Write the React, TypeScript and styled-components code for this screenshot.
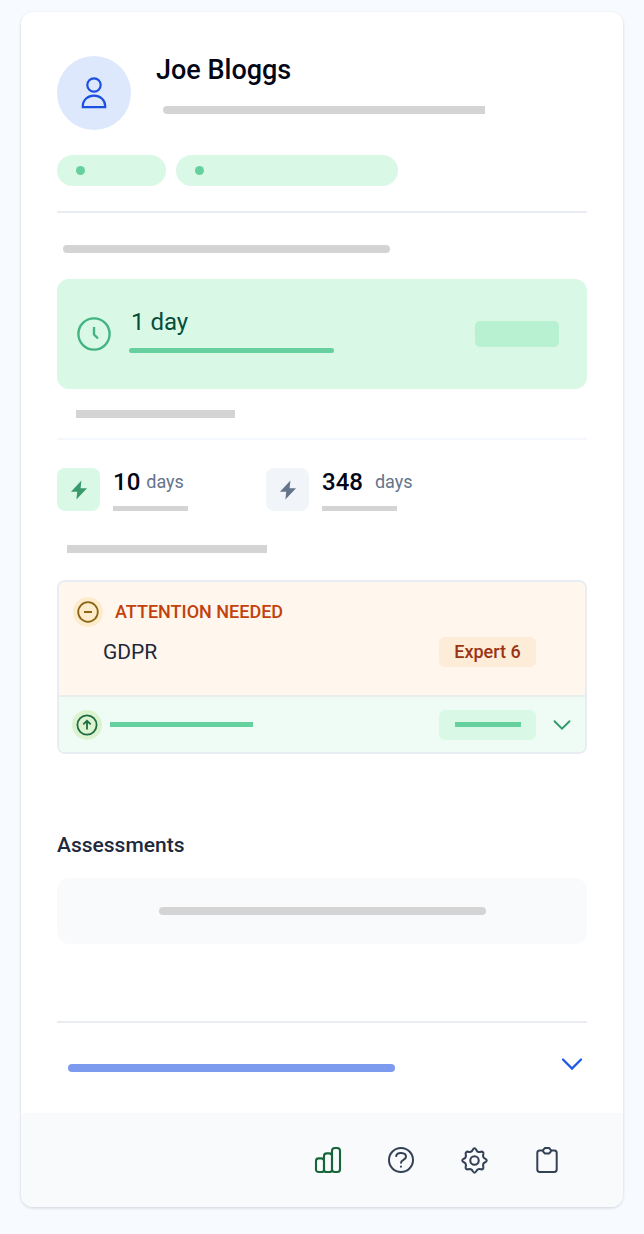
import React from "react";
import styled, { createGlobalStyle } from "styled-components";

const GlobalStyle = createGlobalStyle`
  *, *::before, *::after { box-sizing: border-box; }
  body {
    margin: 0;
    background: #f7fbff;
    font-family: Roboto, "Liberation Sans", sans-serif;
    color: #0f172a;
  }
  h1, h2, h3, p { margin: 0; }
  svg { display: block; flex: none; }
`;

const Page = styled.div`
  padding: 12px 21px 27px 21px;
`;

const Card = styled.main`
  background: #ffffff;
  border-radius: 12px;
  box-shadow: 0 1px 3px rgba(15, 23, 42, 0.18);
  overflow: hidden;
`;

const Body = styled.div`
  padding: 44px 36px 0;
`;

const Bar = styled.div<{ $w: number; $h?: number; $color?: string; $round?: string }>`
  width: ${(p) => p.$w}px;
  max-width: 100%;
  height: ${(p) => p.$h ?? 8}px;
  background: ${(p) => p.$color ?? "#d4d4d4"};
  border-radius: ${(p) => p.$round ?? "0"};
`;

const Line = styled.hr<{ $color?: string }>`
  height: 2px;
  margin: 0;
  border: 0;
  background: ${(p) => p.$color ?? "#e9edf3"};
`;

const Profile = styled.header`
  display: flex;
  gap: 25px;
`;

const Avatar = styled.div`
  display: grid;
  place-items: center;
  width: 74px;
  height: 74px;
  border-radius: 50%;
  background: #dde8fc;
  flex: none;
`;

const ProfileText = styled.div`
  display: flex;
  flex-direction: column;
  gap: 22px;
  min-width: 0;
  ${Bar} { margin-left: 7px; }
`;

const Name = styled.h1`
  font-size: 27px;
  font-weight: 500;
  line-height: 28px;
  color: #020617;
`;

const Pills = styled.div`
  display: flex;
  gap: 10px;
  margin: 25px 0;
`;

const Pill = styled.div<{ $w: number }>`
  display: flex;
  align-items: center;
  width: ${(p) => p.$w}px;
  height: 31px;
  padding-left: 19px;
  border-radius: 16px;
  background: #daf8e6;
  &::before {
    content: "";
    width: 9px;
    height: 9px;
    border-radius: 50%;
    background: #66d19e;
  }
`;

const Availability = styled.section`
  padding: 32px 0 20px;
`;

const LabelSlot = styled.div<{ $indent: number }>`
  padding-left: ${(p) => p.$indent}px;
`;

const Notice = styled.div`
  display: flex;
  align-items: center;
  height: 110px;
  margin: 26px 0 21px;
  padding: 0 28px 0 20px;
  border-radius: 12px;
  background: #daf8e6;
`;

const NoticeText = styled.div`
  display: flex;
  flex-direction: column;
  gap: 12px;
  margin: 0 auto 0 18px;
  padding-bottom: 8px;
`;

const NoticeTitle = styled.h2`
  padding-left: 2px;
  font-size: 24px;
  font-weight: 400;
  line-height: 28px;
  color: #064e3b;
`;

const NoticeTag = styled.div`
  width: 84px;
  height: 26px;
  border-radius: 5px;
  background: #b7f1d2;
`;

const Stats = styled.section`
  display: grid;
  grid-template-columns: 209px 1fr;
  padding: 28px 0 34px;
`;

const Stat = styled.div`
  display: flex;
  gap: 13px;
`;

const StatIcon = styled.div<{ $bg: string }>`
  display: grid;
  place-items: center;
  width: 43px;
  height: 43px;
  border-radius: 8px;
  background: ${(p) => p.$bg};
`;

const StatText = styled.div`
  display: flex;
  flex-direction: column;
  justify-content: space-between;
`;

const StatValue = styled.p<{ $gap: number }>`
  display: flex;
  align-items: center;
  gap: ${(p) => p.$gap}px;
  font-size: 18px;
  line-height: 28px;
  color: #64748b;
  strong {
    font-size: 24px;
    font-weight: 500;
    color: #020617;
  }
`;

const Skills = styled.section`
  margin: 27px 0 78px;
  border: 2px solid #e8edf4;
  border-radius: 8px;
  overflow: hidden;
`;

const Attention = styled.div`
  padding: 15px 49px 28px 14px;
  border-bottom: 2px solid #e8edee;
  background: #fff6ed;
`;

const Heading = styled.div`
  display: flex;
  align-items: center;
  gap: 12px;
`;

const AttentionTitle = styled.h3`
  font-size: 18px;
  font-weight: 500;
  line-height: 24px;
  color: #c2410c;
`;

const SkillRow = styled.div`
  display: flex;
  align-items: center;
  justify-content: space-between;
  margin-top: 10px;
  padding-left: 30px;
  font-size: 21px;
  line-height: 30px;
  color: #1e293b;
`;

const Level = styled.span<{ $bg: string }>`
  display: grid;
  place-items: center;
  width: 97px;
  height: 30px;
  border-radius: 6px;
  background: ${(p) => p.$bg};
  font-size: 18px;
  font-weight: 500;
  color: #9a3412;
`;

const Improving = styled.div`
  display: flex;
  align-items: center;
  gap: 8px;
  height: 55px;
  padding: 0 8px 0 13px;
  background: #eefcf5;
  ${Level} { margin: 0 3px 0 auto; }
`;

const IconButton = styled.button`
  display: grid;
  place-items: center;
  width: 30px;
  height: 30px;
  padding: 0;
  border: 0;
  background: none;
  cursor: pointer;
`;

const SectionTitle = styled.h2`
  font-size: 21px;
  font-weight: 500;
  line-height: 26px;
  color: #1e293b;
`;

const EmptyBox = styled.div`
  display: grid;
  place-items: center;
  height: 66px;
  margin: 20px 0 77px;
  border-radius: 12px;
  background: #f8fafc;
`;

const MoreRow = styled.div`
  display: flex;
  align-items: center;
  justify-content: space-between;
  height: 90px;
  padding: 0 0 8px 11px;
  ${Bar} { margin-top: 8px; }
`;

const Footer = styled.nav`
  display: flex;
  align-items: center;
  justify-content: flex-end;
  gap: 43px;
  height: 94px;
  padding-right: 61px;
  background: #f8fafc;
`;

const UserIcon = () => (
  <svg width="28" height="34" viewBox="0 0 28 34" fill="none" stroke="#1d4fe0" strokeWidth="2.2">
    <circle cx="14" cy="9" r="6.7" />
    <path d="M2.8 31.2v-1C2.8 23.8 8 19.6 14 19.6s11.2 4.2 11.2 10.6v1z" />
  </svg>
);

const ClockIcon = () => (
  <svg width="34" height="34" viewBox="0 0 34 34" fill="none" stroke="#43b581" strokeWidth="2.4">
    <circle cx="17" cy="17" r="15.6" />
    <path d="M17 10v7.500l4 4" />
  </svg>
);

const BoltIcon = ({ color }: { color: string }) => (
  <svg width="18" height="20" viewBox="0 0 18 20" fill={color}>
    <path d="M11.4.5 1 11.8h6.2L6.4 19.5 17 8.2h-6.4z" />
  </svg>
);

const MinusIcon = () => (
  <svg width="30" height="30" viewBox="0 0 30 30" fill="none" stroke="#8a6516" strokeWidth="1.8">
    <circle cx="15" cy="15" r="15" fill="#fdeccb" stroke="none" />
    <circle cx="15" cy="15" r="9.8" />
    <path d="M11 15h8" />
  </svg>
);

const ArrowUpIcon = () => (
  <svg width="30" height="30" viewBox="0 0 30 30" fill="none" stroke="#1f6b45" strokeWidth="1.8">
    <circle cx="15" cy="15" r="15" fill="#dcf3cf" stroke="none" />
    <circle cx="15" cy="15" r="9.6" />
    <path d="M15 19.5v-8.2M11.3 14.4 15 10.8l3.7 3.6" />
  </svg>
);

const Chevron = ({ color, size }: { color: string; size: number }) => (
  <svg width={size} height={size} viewBox="0 0 24 24" fill="none" stroke={color} strokeWidth="2.3" strokeLinecap="round">
    <path d="m3 7.5 9 9 9-9" />
  </svg>
);

const ChartIcon = () => (
  <svg width="28" height="28" viewBox="0 0 28 28" fill="none" stroke="#17663a" strokeWidth="2.100">
    <rect x="2" y="12.4" width="8" height="13.600" rx="2.6" />
    <rect x="10" y="7.400" width="8" height="18.600" rx="2.6" />
    <rect x="18" y="2" width="8" height="24" rx="2.8" />
  </svg>
);

const HelpIcon = () => (
  <svg width="28" height="28" viewBox="0 0 28 28" fill="none" stroke="#334155" strokeWidth="2" strokeLinecap="round">
    <circle cx="14" cy="14" r="12" />
    <path d="M9.200 10.100C9.800 5.800 19 6 19 10.800c0 3.200-5 2.900-5 6M14 20.600v.2" />
  </svg>
);

const GearIcon = () => (
  <svg width="29" height="29" viewBox="0 0 24 24" fill="none" stroke="#334155" strokeWidth="1.7" strokeLinejoin="round">
    <circle cx="12" cy="12" r="3.500" />
    <path d="M10.500 3.200Q11.200 1.900 12 1.900T13.500 3.200Q14 4.700 15.200 4.900T17.500 4.700Q18.400 4.500 19 5.100T19.300 6.700Q18.900 7.900 19.200 8.900T20.800 10.500Q22.100 11.200 22.100 12T20.800 13.500Q19.400 14 19.200 15.100T19.300 17.300Q19.500 18.300 19 18.900T17.300 19.300Q16.200 18.900 15.100 19.200T13.500 20.800Q12.800 22.100 12 22.100T10.500 20.800Q10 19.400 8.900 19.200T6.700 19.300Q5.700 19.500 5.100 19T4.700 17.300Q5.100 16.200 4.800 15.100T3.200 13.500Q1.900 12.800 1.900 12T3.200 10.500Q4.600 10 4.800 8.900T4.700 6.700Q4.500 5.700 5.100 5.100T6.700 4.700Q7.800 5.100 8.900 4.800T10.500 3.200Z" />
  </svg>
);

const ClipboardIcon = () => (
  <svg width="28" height="28" viewBox="0 0 28 28" fill="none" stroke="#334155" strokeWidth="2" strokeLinejoin="round">
    <path d="M10.500 4.400H6.500A2.400 2.400 0 0 0 4.300 6.800v16.800A2.400 2.400 0 0 0 6.700 26h14.600a2.400 2.400 0 0 0 2.400-2.400V6.800a2.400 2.400 0 0 0-2.200-2.400h-4" />
    <path d="M11.900 2h4.200c.5 1.100 1.900 1.200 1.900 2.700s-1.400 1.900-2.100 2.900h-3.800c-.7-1-2.100-1.400-2.100-2.900s1.400-1.600 1.900-2.700z" />
  </svg>
);

const footerItems = [
  { label: "Statistics", icon: <ChartIcon /> },
  { label: "Help", icon: <HelpIcon /> },
  { label: "Settings", icon: <GearIcon /> },
  { label: "Clipboard", icon: <ClipboardIcon /> },
];

export default function App() {
  return (
    <>
      <GlobalStyle />
      <Page>
        <Card>
          <Body>
            <Profile>
              <Avatar>
                <UserIcon />
              </Avatar>
              <ProfileText>
                <Name>Joe Bloggs</Name>
                <Bar $w={322} $round="4px 0 0 4px" />
              </ProfileText>
            </Profile>

            <Pills>
              <Pill $w={109} />
              <Pill $w={222} />
            </Pills>
            <Line />

            <Availability>
              <LabelSlot $indent={6}>
                <Bar $w={327} $round="4px" />
              </LabelSlot>
              <Notice>
                <ClockIcon />
                <NoticeText>
                  <NoticeTitle>1 day</NoticeTitle>
                  <Bar $w={205} $h={5} $color="#66d19e" $round="3px" />
                </NoticeText>
                <NoticeTag />
              </Notice>
              <LabelSlot $indent={19}>
                <Bar $w={159} />
              </LabelSlot>
            </Availability>
            <Line $color="#f4f7fb" />

            <Stats>
              <Stat>
                <StatIcon $bg="#daf8e6">
                  <BoltIcon color="#3a9a6c" />
                </StatIcon>
                <StatText>
                  <StatValue $gap={6}>
                    <strong>10</strong> days
                  </StatValue>
                  <Bar $w={75} $h={5} />
                </StatText>
              </Stat>
              <Stat>
                <StatIcon $bg="#f1f5f9">
                  <BoltIcon color="#64748b" />
                </StatIcon>
                <StatText>
                  <StatValue $gap={12}>
                    <strong>348</strong> days
                  </StatValue>
                  <Bar $w={75} $h={5} />
                </StatText>
              </Stat>
            </Stats>

            <LabelSlot $indent={10}>
              <Bar $w={200} />
            </LabelSlot>

            <Skills>
              <Attention>
                <Heading>
                  <MinusIcon />
                  <AttentionTitle>ATTENTION NEEDED</AttentionTitle>
                </Heading>
                <SkillRow>
                  GDPR
                  <Level $bg="#fdecd8">Expert 6</Level>
                </SkillRow>
              </Attention>
              <Improving>
                <ArrowUpIcon />
                <Bar $w={143} $h={5} $color="#66d19e" />
                <Level $bg="#daf8e6">
                  <Bar $w={66} $h={5} $color="#66d19e" />
                </Level>
                <IconButton type="button" aria-label="Expand skills">
                  <Chevron color="#2f9a6b" size={20} />
                </IconButton>
              </Improving>
            </Skills>

            <SectionTitle>Assessments</SectionTitle>
            <EmptyBox>
              <Bar $w={327} $round="4px" />
            </EmptyBox>

            <Line />
            <MoreRow>
              <Bar $w={327} $color="#7c9aee" $round="4px" />
              <IconButton type="button" aria-label="Show more">
                <Chevron color="#2258e6" size={24} />
              </IconButton>
            </MoreRow>
          </Body>
          <Footer aria-label="Tools">
            {footerItems.map((item) => (
              <IconButton type="button" key={item.label} aria-label={item.label}>
                {item.icon}
              </IconButton>
            ))}
          </Footer>
        </Card>
      </Page>
    </>
  );
}
